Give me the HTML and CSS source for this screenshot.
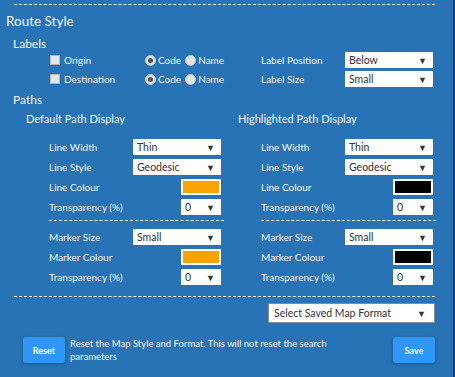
FILE: index.html
```html
<!DOCTYPE html>
<html>
<head>
<link rel="stylesheet" href="styles.css">
</head>
<body>
<div class="panel">
  <div class="dash top"></div>
  <div class="title">Route Style</div>
  <div class="sub">Labels</div>
  <div class="labels">
    <div class="opt"><span class="box"></span>Origin</div>
    <div class="opt"><span class="radio on"></span>Code<span class="radio second"></span>Name</div>
    <div class="lbl">Label Position</div>
    <div class="sel wide"><span>Below</span><b>&#9660;</b></div>

    <div class="opt"><span class="box"></span>Destination</div>
    <div class="opt"><span class="radio on"></span>Code<span class="radio second"></span>Name</div>
    <div class="lbl">Label Size</div>
    <div class="sel wide"><span>Small</span><b>&#9660;</b></div>
  </div>
  <div class="sub paths">Paths</div>
  <div class="cols">
    <div class="col">
      <div class="head">Default Path Display</div>
      <div class="rows">
        <div class="lbl">Line Width</div><div class="sel wide"><span>Thin</span><b>&#9660;</b></div>
        <div class="lbl">Line Style</div><div class="sel wide"><span>Geodesic</span><b>&#9660;</b></div>
        <div class="lbl">Line Colour</div><div class="swatch orange"></div>
        <div class="lbl">Transparency (%)</div><div class="sel small"><span>0</span><b>&#9660;</b></div>
      </div>
      <div class="dash mid"></div>
      <div class="rows">
        <div class="lbl">Marker Size</div><div class="sel wide"><span>Small</span><b>&#9660;</b></div>
        <div class="lbl">Marker Colour</div><div class="swatch orange"></div>
        <div class="lbl">Transparency (%)</div><div class="sel small"><span>0</span><b>&#9660;</b></div>
      </div>
    </div>
    <div class="col">
      <div class="head">Highlighted Path Display</div>
      <div class="rows">
        <div class="lbl">Line Width</div><div class="sel wide"><span>Thin</span><b>&#9660;</b></div>
        <div class="lbl">Line Style</div><div class="sel wide"><span>Geodesic</span><b>&#9660;</b></div>
        <div class="lbl">Line Colour</div><div class="swatch black"></div>
        <div class="lbl">Transparency (%)</div><div class="sel small"><span>0</span><b>&#9660;</b></div>
      </div>
      <div class="dash mid"></div>
      <div class="rows">
        <div class="lbl">Marker Size</div><div class="sel wide"><span>Small</span><b>&#9660;</b></div>
        <div class="lbl">Marker Colour</div><div class="swatch black"></div>
        <div class="lbl">Transparency (%)</div><div class="sel small"><span>0</span><b>&#9660;</b></div>
      </div>
    </div>
  </div>
  <div class="dash bottom"></div>
  <div class="saved"><div class="sel format"><span>Select Saved Map Format</span><b>&#9660;</b></div></div>
  <div class="actions">
    <button class="btn">Reset</button>
    <div class="note">Reset the Map Style and Format. This will not reset the search parameters</div>
    <button class="btn">Save</button>
  </div>
</div>
</body>
</html>
```

FILE: styles.css
```css
body {
  margin: 0;
  font-family: "Lato", "Open Sans", sans-serif;
  color: #f4f6fa;
}

.panel {
  background-color: #2773b6;
  height: 377px;
  width: 455px;
  border-right: 2px solid #1c3c6c;
  padding-top: 4px;
  box-sizing: border-box;
}

/* dashed separators */
.dash {
  border-top: 1px dashed #ffffff;
}
.dash.top {
  margin: 0 18px 0 14px;
}
.dash.mid {
  margin: 5px 0 8px 0;
  width: 175px;
}
.dash.bottom {
  margin: 11px 18px 0 14px;
}

.title {
  font-size: 13.5px;
  margin: 7px 0 0 6px;
  line-height: 18px;
}
.sub {
  font-size: 12px;
  margin: 6px 0 0 13px;
  line-height: 16px;
}
.sub.paths {
  margin-top: 5px;
}

.lbl {
  font-size: 10px;
  line-height: 16px;
  white-space: nowrap;
}

/* label options grid */
.labels {
  display: grid;
  grid-template-columns: 95px 116px 84px 88px;
  row-gap: 3px;
  margin: 0 0 0 50px;
  align-items: center;
}
.opt {
  display: flex;
  align-items: center;
  font-size: 10px;
  line-height: 16px;
}
.box {
  width: 8px;
  height: 8px;
  background: #e6e6e6;
  border: 1px solid #b5b5b5;
  margin-right: 4px;
}
.radio {
  width: 9px;
  height: 9px;
  border-radius: 50%;
  background: #e4e4e4;
  border: 1px solid #c8c8c8;
  margin: 0 2px 0 0;
  position: relative;
}
.radio.second {
  margin-left: 4px;
}
.radio.on::after {
  content: "";
  position: absolute;
  left: 2px;
  top: 2px;
  width: 5px;
  height: 5px;
  border-radius: 50%;
  background: #555;
}

/* fake selects */
.sel {
  background: #ffffff;
  color: #333;
  height: 16px;
  display: flex;
  align-items: center;
  justify-content: space-between;
  padding: 0 6px 0 4px;
  box-sizing: border-box;
  font-size: 10.5px;
}
.sel b {
  font-size: 9px;
  color: #333;
}
.sel.wide {
  width: 88px;
}
.sel.small {
  width: 40px;
  justify-self: end;
}

.swatch {
  width: 40px;
  height: 16px;
  border: 2px solid #ffffff;
  box-sizing: border-box;
  justify-self: end;
}
.swatch.orange { background: #f8a300; }
.swatch.black { background: #000000; }

/* two path columns */
.cols {
  display: flex;
  margin: 3px 0 0 26px;
}
.col {
  width: 212px;
}
.col .dash.mid {
  margin-left: 23px;
}
.head {
  font-size: 11px;
  line-height: 16px;
  margin-bottom: 12px;
}
.rows {
  display: grid;
  grid-template-columns: 84px 88px;
  row-gap: 4px;
  margin-left: 23px;
  align-items: center;
}

.saved {
  display: flex;
  justify-content: flex-end;
  margin: 6px 18px 0 0;
}
.sel.format {
  width: 167px;
  height: 20px;
  border: 1px solid #8a8a8a;
  font-size: 10.5px;
  padding: 0 8px 0 5px;
}

.actions {
  display: flex;
  align-items: center;
  margin: 14px 18px 0 23px;
}
.btn {
  background: #3097f8;
  color: #ffffff;
  border: none;
  border-radius: 3px;
  box-shadow: 0 1px 3px rgba(0, 0, 0, 0.3);
  width: 42px;
  height: 26px;
  font-family: inherit;
  font-size: 9px;
  font-weight: bold;
  padding: 0;
  flex-shrink: 0;
}
.note {
  font-size: 9.5px;
  line-height: 13px;
  margin-left: 5px;
  width: 264px;
}
.actions .btn:last-child {
  margin-left: auto;
}
```
